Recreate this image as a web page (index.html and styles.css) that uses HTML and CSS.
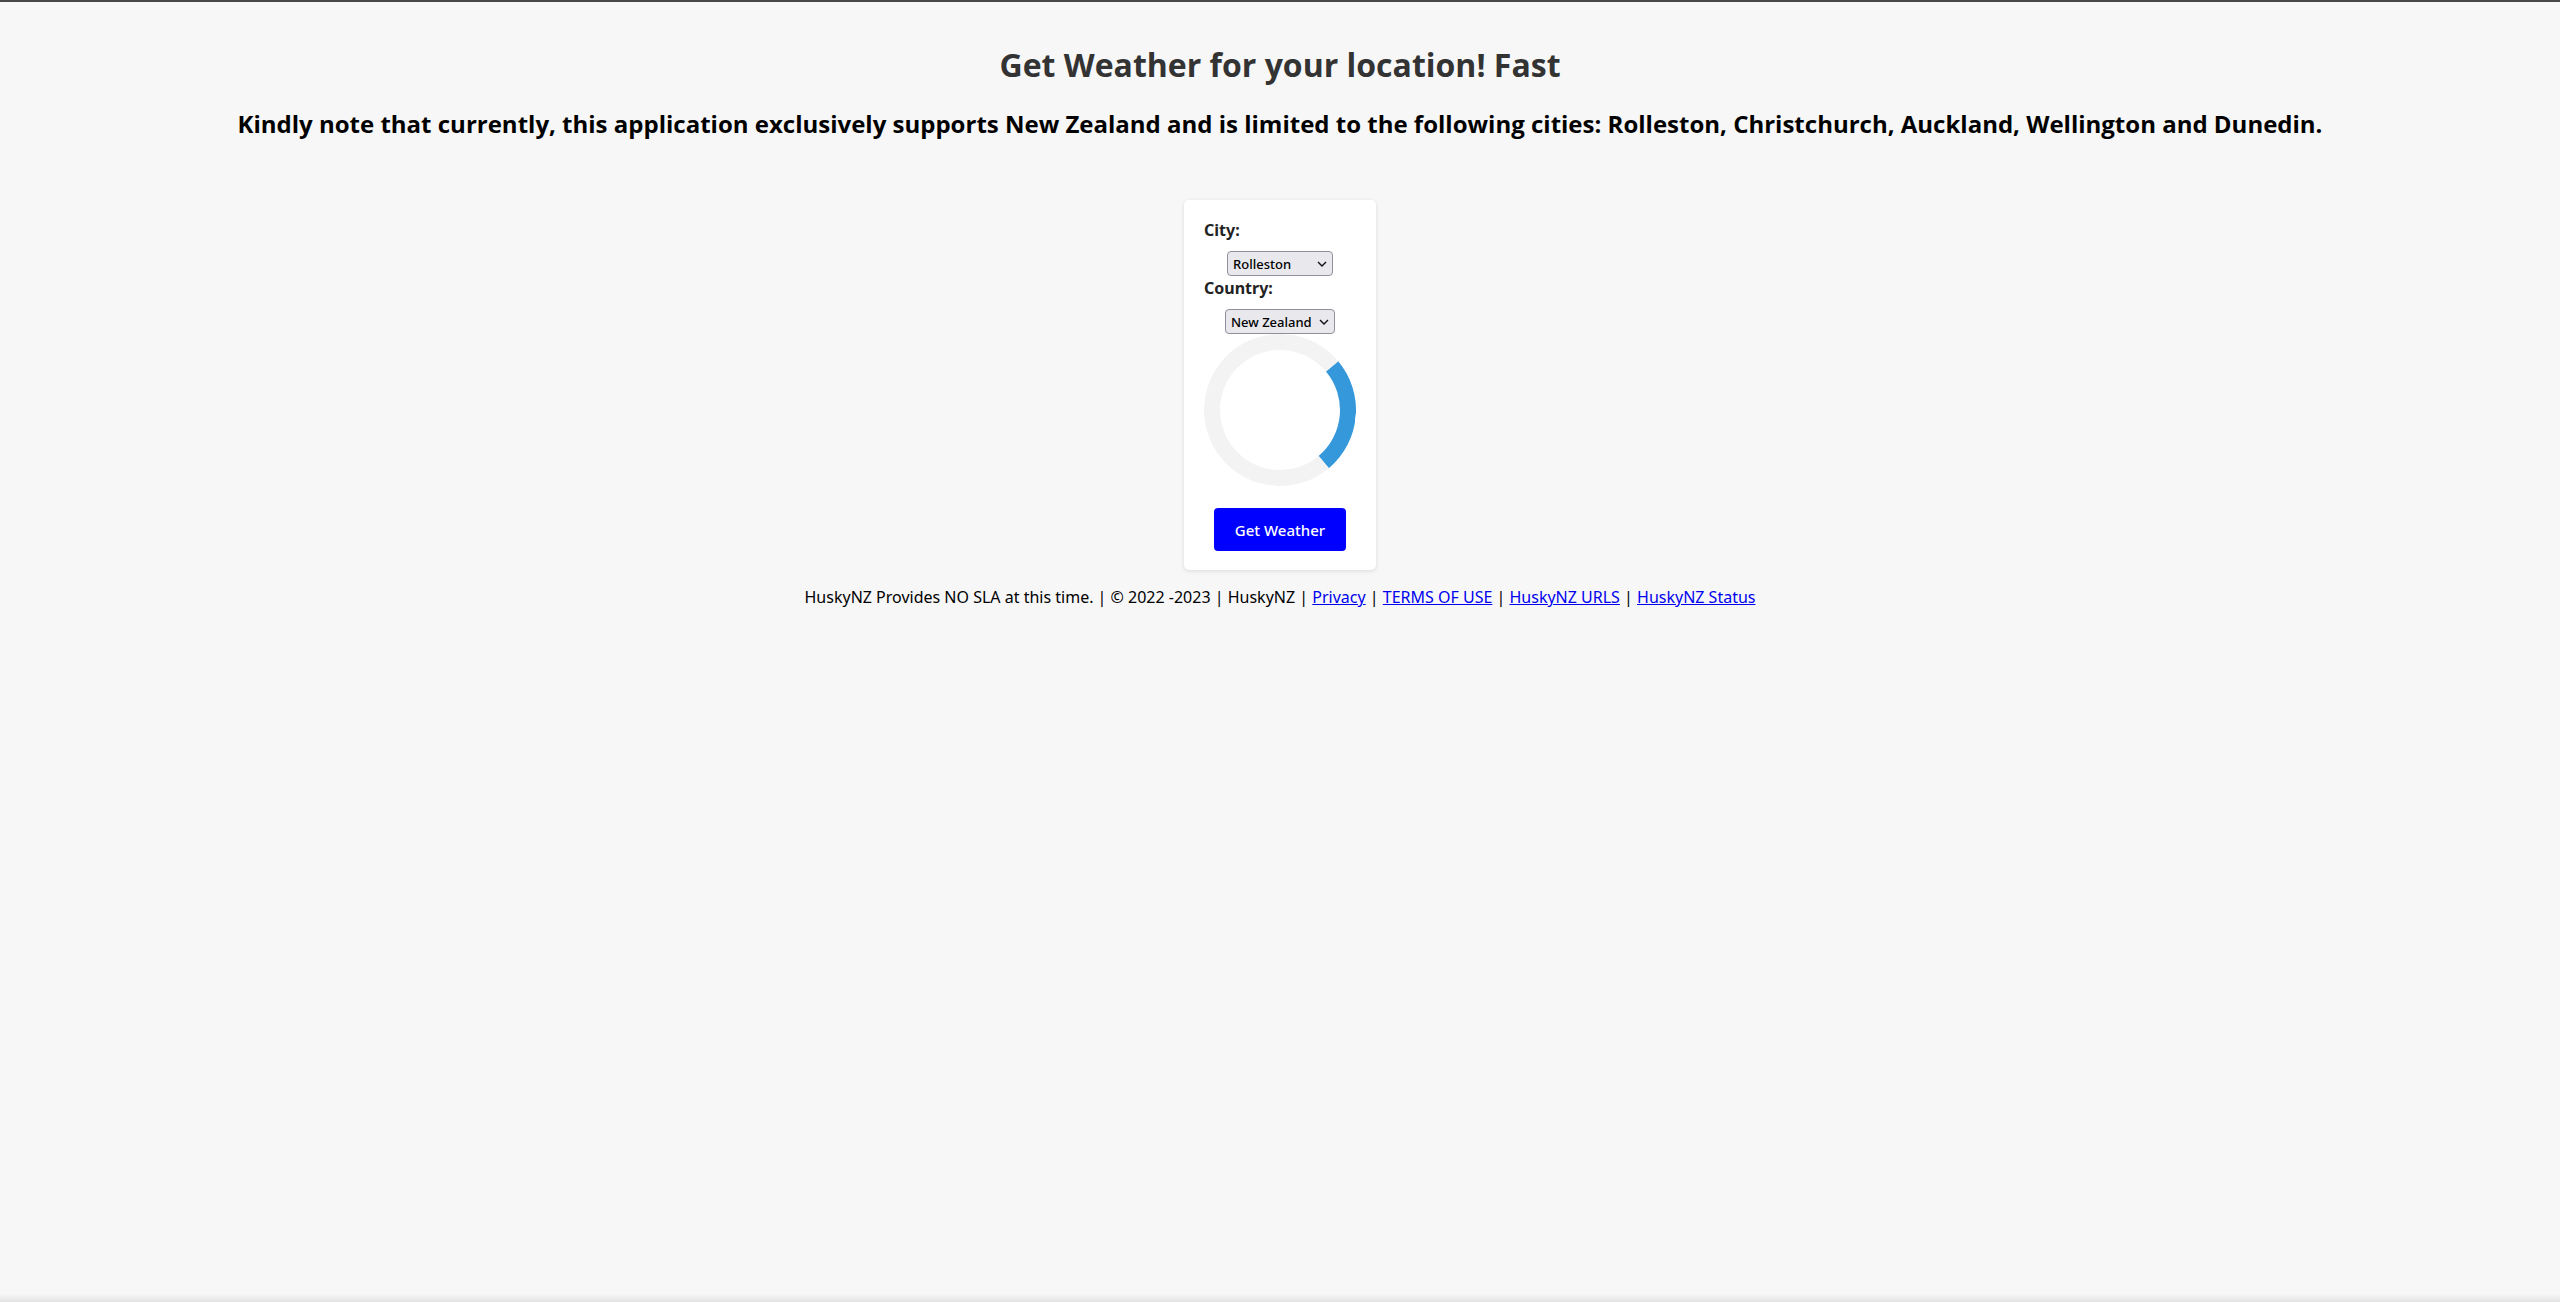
FILE: index.html
```html
<!DOCTYPE html>
<html lang="en">
<head>
<meta charset="utf-8">
<title>Get Weather</title>
<link rel="stylesheet" href="styles.css">
</head>
<body>
<header class="intro">
  <h1 class="title">Get Weather for your location! Fast</h1>
  <h2 class="notice">Kindly note that currently, this application exclusively supports New Zealand and is limited to the following cities: Rolleston, Christchurch, Auckland, Wellington and Dunedin.</h2>
</header>
<main class="card">
  <label class="field-label" for="city">City:</label>
  <span class="select-wrap">
    <select id="city" class="select select-city">
      <option>Rolleston</option>
      <option>Christchurch</option>
      <option>Auckland</option>
      <option>Wellington</option>
      <option>Dunedin</option>
    </select>
    <svg class="chev" width="10" height="6" viewBox="0 0 10 6"><path d="M1 1 L5 5 L9 1" fill="none" stroke="#111" stroke-width="1.4"/></svg>
  </span>
  <label class="field-label" for="country">Country:</label>
  <span class="select-wrap select-wrap-last">
    <select id="country" class="select select-country">
      <option>New Zealand</option>
    </select>
    <svg class="chev" width="10" height="6" viewBox="0 0 10 6"><path d="M1 1 L5 5 L9 1" fill="none" stroke="#111" stroke-width="1.4"/></svg>
  </span>
  <div class="loader"></div>
  <button class="btn" type="button">Get Weather</button>
</main>
<footer class="footer">HuskyNZ Provides NO SLA at this time. | © 2022 -2023 | HuskyNZ | <a href="#">Privacy</a> | <a href="#">TERMS OF USE</a> | <a href="#">HuskyNZ URLS</a> | <a href="#">HuskyNZ Status</a></footer>
<div class="bottom-shade"></div>
</body>
</html>
```
FILE: styles.css
```css
html, body {
  height: 100%;
}
body {
  margin: 0;
  box-sizing: border-box;
  border-top: 2px solid #474747;
  background: #f7f7f7;
  font-family: "Noto Sans", "Open Sans", sans-serif;
  text-align: center;
  color: #000;
}
.intro {
  padding-top: 41px;
}
.title {
  margin: 0;
  font-family: "Open Sans", "Noto Sans", sans-serif;
  font-weight: 700;
  font-size: 32px;
  line-height: 44px;
  color: #333;
}
.notice {
  margin: 21px 0 0;
  font-family: "Open Sans", "Noto Sans", sans-serif;
  font-weight: 700;
  font-size: 24px;
  line-height: 32px;
  color: #000;
}
.card {
  width: 152px;
  margin: 60px auto 0;
  padding: 20px 20px 19px;
  background: #fff;
  border-radius: 5px;
  box-shadow: 0 1px 4px rgba(0,0,0,0.12);
  display: flex;
  flex-direction: column;
  align-items: center;
}
.field-label {
  align-self: stretch;
  text-align: left;
  font-weight: 700;
  font-size: 16px;
  line-height: 20px;
  color: #222;
}
.select-wrap {
  position: relative;
  display: block;
  margin: 11px 0 2px;
}
.select-wrap-last {
  margin-bottom: 0;
}
.select {
  appearance: none;
  -webkit-appearance: none;
  display: block;
  height: 25px;
  box-sizing: border-box;
  padding: 0 16px 0 5px;
  background: #e9e9ed;
  border: 1px solid #8f8f9d;
  border-radius: 4px;
  font-family: "Noto Sans", sans-serif;
  font-size: 13px;
  font-weight: 500;
  color: #000;
  text-align: left;
}
.select-city { width: 106px; }
.select-country { width: 110px; }
.chev {
  position: absolute;
  right: 6px;
  top: 10px;
  pointer-events: none;
}
.loader {
  width: 120px;
  height: 120px;
  border: 16px solid #f3f3f3;
  border-top-color: #3498db;
  border-radius: 50%;
  transform: rotate(95deg);
  flex: none;
}
.btn {
  margin-top: 22px;
  width: 132px;
  height: 43px;
  border: none;
  border-radius: 4px;
  background: #0000ff;
  color: #fff;
  font-family: "Noto Sans", sans-serif;
  font-size: 15px;
  font-weight: 500;
}
.footer {
  margin-top: 16px;
  font-size: 16px;
  line-height: 22px;
  color: #000;
}
.footer a {
  color: #0000ee;
}
.bottom-shade {
  position: fixed;
  left: 0;
  right: 0;
  bottom: 0;
  height: 8px;
  background: linear-gradient(#f7f7f7, #e2e2e2);
}
```
